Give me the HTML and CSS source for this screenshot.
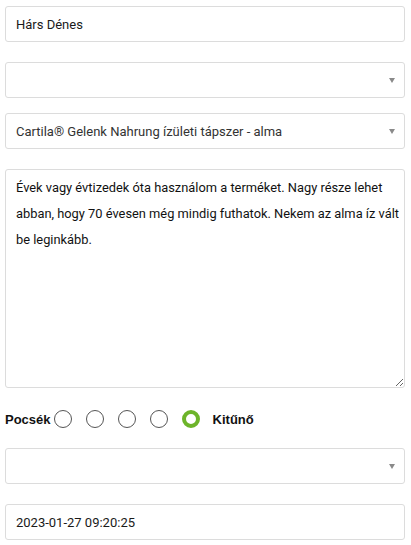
FILE: index.html
```html
<!DOCTYPE html>
<html lang="hu">
<head>
<meta charset="utf-8">
<title>Értékelés</title>
<link rel="stylesheet" href="styles.css">
</head>
<body>
<form class="form">
  <input class="field field-a" type="text" value="Hárs Dénes">
  <div class="select-wrap field-b">
    <select class="field select"><option></option></select>
  </div>
  <div class="select-wrap field-a">
    <select class="field select"><option>Cartila® Gelenk Nahrung ízületi tápszer - alma</option></select>
  </div>
  <textarea class="field area">Évek vagy évtizedek óta használom a terméket. Nagy része lehet abban, hogy 70 évesen még mindig futhatok. Nekem az alma íz vált be leginkább.</textarea>
  <div class="rating">
    <span class="rating-label">Pocsék</span>
    <input class="radio" type="radio" name="r">
    <input class="radio" type="radio" name="r">
    <input class="radio" type="radio" name="r">
    <input class="radio" type="radio" name="r">
    <input class="radio" type="radio" name="r" checked>
    <span class="rating-label end">Kitűnő</span>
  </div>
  <div class="select-wrap field-a">
    <select class="field select"><option></option></select>
  </div>
  <input class="field" type="text" value="2023-01-27 09:20:25">
</form>
</body>
</html>
```

FILE: styles.css
```css
* { box-sizing: border-box; }
html, body { margin: 0; padding: 0; background: #fff; }
body { font-family: Roboto, "Liberation Sans", Arial, sans-serif; }
.form {
  display: flex;
  flex-direction: column;
  padding: 6px 6px 0 5px;
}
.field {
  display: block;
  width: 100%;
  height: 36px;
  margin: 0;
  padding: 0 10px;
  border: 1px solid #dcdcdc;
  border-radius: 3px;
  background: #fff;
  font-family: Roboto, "Liberation Sans", Arial, sans-serif;
  font-size: 13px;
  color: #1a1a1a;
  outline: none;
}
.field-a { margin-bottom: 20px; }
.field-b { margin-bottom: 15px; }
.select-wrap { position: relative; }
.select {
  -webkit-appearance: none;
  appearance: none;
  color: #333;
}
.select-wrap::after {
  content: "";
  position: absolute;
  right: 10px;
  top: 16px;
  border-left: 3.5px solid transparent;
  border-right: 3.5px solid transparent;
  border-top: 5px solid #8a8a8a;
}
.area {
  height: 219px;
  padding: 5px 4px 5px 10px;
  font-size: 12.85px;
  line-height: 26px;
  resize: vertical;
  margin-bottom: 20px;
  color: #111;
}
.rating {
  display: flex;
  align-items: center;
  height: 22px;
  margin-bottom: 18px;
}
.rating-label {
  font-family: "Liberation Sans", Arial, sans-serif;
  font-size: 13px;
  font-weight: 700;
  color: #111;
  margin-right: 3px;
}
.rating-label.end { margin-left: 13px; }
.radio {
  -webkit-appearance: none;
  appearance: none;
  width: 18px;
  height: 18px;
  margin: 0 14px 0 0;
  border: 1px solid #555;
  border-radius: 50%;
  background: #fff;
}
.radio:last-of-type { margin-right: 0; }
.radio:checked {
  border: 4.5px solid #6db42a;
}
```
